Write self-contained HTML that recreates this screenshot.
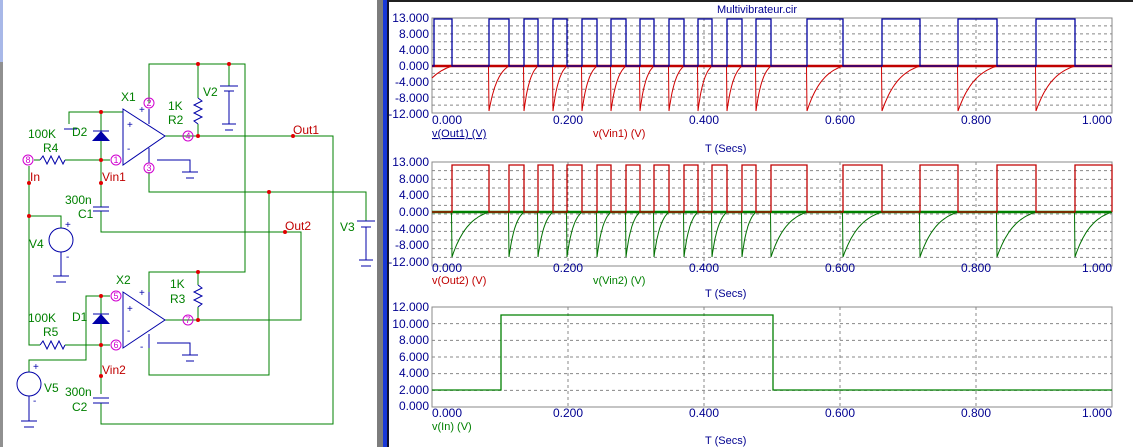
<!DOCTYPE html>
<html><head><meta charset="utf-8"><style>
html,body{margin:0;padding:0;background:#fff;width:1133px;height:447px;overflow:hidden}
svg{display:block;font-family:"Liberation Sans",Arial,sans-serif}
</style></head><body>
<svg id="s" width="1133" height="447" viewBox="0 0 1133 447" xmlns="http://www.w3.org/2000/svg">
<rect width="1133" height="447" fill="#fff"/>
<rect x="0" y="0" width="3" height="62" fill="#a8b8e8"/>
<rect x="0" y="62" width="3" height="385" fill="#909090"/>
<rect x="377" y="0" width="6" height="447" fill="#7c7c7c"/>
<rect x="383" y="0" width="4" height="447" fill="#1838d8"/>
<rect x="387" y="0" width="2" height="447" fill="#101030"/>
<rect x="389" y="0" width="744" height="2" fill="#202020"/>

<g fill="none" stroke-width="1">
<g stroke="#008000">
<polyline points="149,103 149,64 245,64 245,272 149,272 149,292"/>
<line x1="198" y1="64" x2="198" y2="98"/>
<line x1="229" y1="64" x2="229" y2="86"/>
<polyline points="165,136 333,136 333,424 101,424 101,403"/>
<polyline points="149,172 149,192 366,192 366,221"/>
<polyline points="269,192 269,375 149,375 149,348"/>
<polyline points="165,320 301,320 301,232 101,232 101,211"/>
<line x1="101" y1="183" x2="101" y2="207"/>
<polyline points="101,112 69,112 69,124"/>
<line x1="101" y1="112" x2="123" y2="112"/>
<line x1="65" y1="160" x2="110" y2="160"/>
<line x1="34" y1="160" x2="40" y2="160"/>
<polyline points="29,166 29,345 40,345"/>
<line x1="65" y1="345" x2="110" y2="345"/>
<polyline points="29,216 61,216 61,228"/>
<polyline points="101,296 86,296 86,360 29,360 29,372"/>
<line x1="101" y1="112" x2="101" y2="131"/>
<line x1="101" y1="140" x2="101" y2="183"/>
<line x1="101" y1="296" x2="101" y2="314"/>
<line x1="101" y1="323" x2="101" y2="394"/>
<line x1="101" y1="296" x2="110" y2="296"/>
<line x1="198" y1="124" x2="198" y2="136"/>
<line x1="198" y1="272" x2="198" y2="285"/>
<line x1="198" y1="307" x2="198" y2="320"/>
</g>
<g stroke="#0000a8">
<polygon points="123,109 123,165 165,136"/>
<polygon points="123,292 123,348 165,320"/>
<polyline points="157,160 190,160 190,172"/><line x1="182" y1="172" x2="198" y2="172"/><line x1="186" y1="178" x2="194" y2="178"/>
<polyline points="157,343 190,343 190,355"/><line x1="182" y1="355" x2="198" y2="355"/><line x1="186" y1="361" x2="194" y2="361"/>
<line x1="149" y1="109" x2="149" y2="124"/><line x1="149" y1="148" x2="149" y2="163"/>
<line x1="149" y1="292" x2="149" y2="306"/><line x1="149" y1="334" x2="149" y2="348"/>
<line x1="220" y1="86" x2="238" y2="86"/><line x1="224" y1="91" x2="234" y2="91"/>
<polyline points="229,91 229,124"/><line x1="222" y1="124" x2="236" y2="124"/><line x1="225" y1="130" x2="233" y2="130"/>
<line x1="357" y1="221" x2="375" y2="221"/><line x1="361" y1="227" x2="371" y2="227"/>
<polyline points="366,227 366,260"/><line x1="359" y1="260" x2="373" y2="260"/><line x1="361" y1="266" x2="371" y2="266"/>
<line x1="64" y1="129" x2="77" y2="129"/>
<polyline points="198,98 202,101 194,105 202,109 194,113 202,117 194,121 198,124"/>
<polyline points="198,285 202,288 194,292 202,296 194,300 202,304 198,307"/>
<polyline points="40,160 43,156 47,164 51,156 55,164 59,156 63,164 65,160"/>
<polyline points="40,345 43,341 47,349 51,341 55,349 59,341 63,349 65,345"/>
<line x1="93" y1="207" x2="109" y2="207"/><line x1="93" y1="211" x2="109" y2="211"/>
<line x1="93" y1="398" x2="109" y2="398"/><line x1="93" y1="403" x2="109" y2="403"/>
<circle cx="61" cy="240" r="12"/><line x1="61" y1="252" x2="61" y2="276"/><line x1="53" y1="276" x2="69" y2="276"/><line x1="56" y1="282" x2="66" y2="282"/>
<circle cx="29" cy="384" r="12"/><line x1="29" y1="396" x2="29" y2="421"/><line x1="21" y1="421" x2="37" y2="421"/><line x1="24" y1="427" x2="34" y2="427"/>
<line x1="93" y1="131" x2="109" y2="131"/><line x1="93" y1="314" x2="109" y2="314"/>
</g>
<polygon points="101,131 92,141 110,141" fill="#0000a8"/>
<polygon points="101,314 92,324 110,324" fill="#0000a8"/>
<g stroke="#d000d0">
<circle cx="149" cy="103" r="5"/><circle cx="149" cy="168" r="5"/><circle cx="188" cy="136" r="5"/>
<circle cx="116" cy="160" r="5"/><circle cx="28" cy="160" r="5"/>
<circle cx="116" cy="296" r="5"/><circle cx="116" cy="345" r="5"/><circle cx="188" cy="320" r="5"/>
</g>
</g>
<g fill="#d000d0" font-size="9" text-anchor="middle">
<text x="149" y="106">2</text><text x="149" y="171">3</text><text x="188" y="139">4</text><text x="116" y="163">1</text><text x="28" y="163">8</text>
<text x="116" y="299">5</text><text x="116" y="348">6</text><text x="188" y="323">7</text>
</g>
<g fill="#e00000">
<circle cx="198" cy="64" r="2"/><circle cx="229" cy="64" r="2"/><circle cx="101" cy="112" r="2"/><circle cx="198" cy="136" r="2"/>
<circle cx="293" cy="136" r="2"/><circle cx="101" cy="160" r="2"/><circle cx="101" cy="183" r="2"/><circle cx="29" cy="183" r="2"/>
<circle cx="269" cy="192" r="2"/><circle cx="29" cy="216" r="2"/><circle cx="285" cy="232" r="2"/><circle cx="198" cy="272" r="2"/>
<circle cx="101" cy="296" r="2"/><circle cx="101" cy="345" r="2"/><circle cx="198" cy="320" r="2"/><circle cx="101" cy="376" r="2"/>
</g>
<g font-size="12" fill="#008000">
<text x="121" y="101">X1</text><text x="116" y="284">X2</text>
<text x="168" y="110">1K</text><text x="168" y="124">R2</text><text x="203" y="96">V2</text>
<text x="170" y="288">1K</text><text x="170" y="303">R3</text><text x="340" y="231">V3</text>
<text x="28" y="138">100K</text><text x="43" y="152">R4</text><text x="72" y="136">D2</text>
<text x="28" y="322">100K</text><text x="43" y="336">R5</text><text x="72" y="321">D1</text>
<text x="65" y="204">300n</text><text x="78" y="218">C1</text>
<text x="65" y="396">300n</text><text x="72" y="411">C2</text>
<text x="29" y="248">V4</text><text x="44" y="392">V5</text>
</g>
<g font-size="12" fill="#c00000">
<text x="293" y="134">Out1</text><text x="285" y="230">Out2</text><text x="30" y="181">In</text>
<text x="102" y="181">Vin1</text><text x="102" y="374">Vin2</text>
</g>
<g font-size="10" fill="#0000a8">
<text x="139" y="113">+</text><text x="127" y="128">+</text><text x="127" y="152">-</text>
<text x="139" y="296">+</text><text x="127" y="312">+</text><text x="127" y="334">-</text><text x="140" y="350">-</text>
<text x="65" y="228">+</text><text x="66" y="260">-</text><text x="33" y="404">-</text><text x="33" y="370">+</text>
</g>
<g id="plots"></g>
</svg>
<script>
var NS="http://www.w3.org/2000/svg",P=document.getElementById("plots");
function el(t,a,txt){var e=document.createElementNS(NS,t);for(var k in a)e.setAttribute(k,a[k]);if(txt!=null)e.textContent=txt;P.appendChild(e);return e;}
var X0=432,X1=1112;
function plot(top,bot,nh,labels,xl){
 for(var i=1;i<nh;i++){var y=top+(bot-top)*i/nh;el("line",{x1:X0,x2:X1,y1:y,y2:y,stroke:"#888","stroke-dasharray":"3,3"});}
 [0.2,0.4,0.6,0.8].forEach(function(f){var x=X0+(X1-X0)*f;el("line",{x1:x,x2:x,y1:top,y2:bot,stroke:"#888","stroke-dasharray":"3,3"});});
 el("rect",{x:X0,y:top,width:X1-X0,height:bot-top,fill:"none",stroke:"#888"});
 labels.forEach(function(l){el("text",{x:429,y:l[1]+4,"text-anchor":"end","font-size":"12",fill:"#000090"},l[0]);});
 ["0.000","0.200","0.400","0.600","0.800","1.000"].forEach(function(t,i){var x=X0+(X1-X0)*i/5;el("text",{x:i==0?X0:x,y:xl,"text-anchor":i==0?"start":(i==5?"end":"middle"),"font-size":"12",fill:"#000090"},t);});
}
plot(18,113,12,[["13.000",18],["8.000",34],["4.000",50],["0.000",66],["-4.000",82],["-8.000",98],["-12.000",114]],124);
plot(162,266,12,[["13.000",162],["8.000",179],["4.000",195],["0.000",212],["-4.000",229],["-8.000",245],["-12.000",262]],272);
plot(307,407,6,[["12.000",307],["10.000",324],["8.000",340],["6.000",357],["4.000",373],["2.000",390],["0.000",406]],417);
el("text",{x:757,y:13,"text-anchor":"middle","font-size":"11",fill:"#000090"},"Multivibrateur.cir");
el("text",{x:432,y:137,"font-size":"11",fill:"#000090","text-decoration":"underline"},"v(Out1) (V)");
el("text",{x:593,y:137,"font-size":"11",fill:"#c00000"},"v(Vin1) (V)");
el("text",{x:432,y:284,"font-size":"11",fill:"#c00000"},"v(Out2) (V)");
el("text",{x:593,y:284,"font-size":"11",fill:"#008000"},"v(Vin2) (V)");
el("text",{x:432,y:430,"font-size":"11",fill:"#008000"},"v(In) (V)");
[152,297,444].forEach(function(y){el("text",{x:705,y:y,"font-size":"11",fill:"#000090"},"T (Secs)");});
function sq(ints,hi,zero){var d="M432,"+zero;ints.forEach(function(a){d+=" L"+a[0]+","+zero+" L"+a[0]+","+hi+" L"+a[1]+","+hi+" L"+a[1]+","+zero;});d+=" L1112,"+zero;return d;}
function ex(ints,lo,zero,first){var d=first,k=2.2,e=Math.exp(-k);ints.forEach(function(a){var w=a[1]-a[0];d+=" M"+(a[0]-0.5)+","+zero+" L"+a[0]+","+lo;for(var i=1;i<=24;i++){var t=i/24;var f=(Math.exp(-k*t)-e)/(1-e);var y=zero+(lo-zero)*f;d+=" L"+(a[0]+w*t).toFixed(1)+","+y.toFixed(1);}});return d;}
var A=[[434,452],[489,509],[524,538],[553,567],[582,597],[611,626],[640,654],[669,684],[698,712],[727,742],[756,771],[807,843],[882,920],[958,997],[1036,1075]];
var B=[[452,489],[509,524],[538,553],[567,582],[597,611],[626,640],[654,669],[684,698],[712,727],[742,756],[771,807],[843,882],[920,958],[997,1036],[1075,1112]];
el("line",{x1:432,x2:1112,y1:66,y2:66,stroke:"#c00000","stroke-width":"2.5"});
el("path",{d:ex(A.slice(1),111,66,"M432,78 Q440,70 452,66"),fill:"none",stroke:"#d00000"});
el("path",{d:sq(A,19,66),fill:"none",stroke:"#0000a0","stroke-width":"1.3"});
el("line",{x1:432,x2:1112,y1:212,y2:212,stroke:"#008000","stroke-width":"2.5"});
el("path",{d:ex(B,257,212,""),fill:"none",stroke:"#007000"});
el("path",{d:sq(B,165,212),fill:"none",stroke:"#c00000","stroke-width":"1.3"});
el("path",{d:"M432,390 L501,390 L501,315 L773,315 L773,390 L1112,390",fill:"none",stroke:"#008000","stroke-width":"1.3"});
</script>
</body></html>
